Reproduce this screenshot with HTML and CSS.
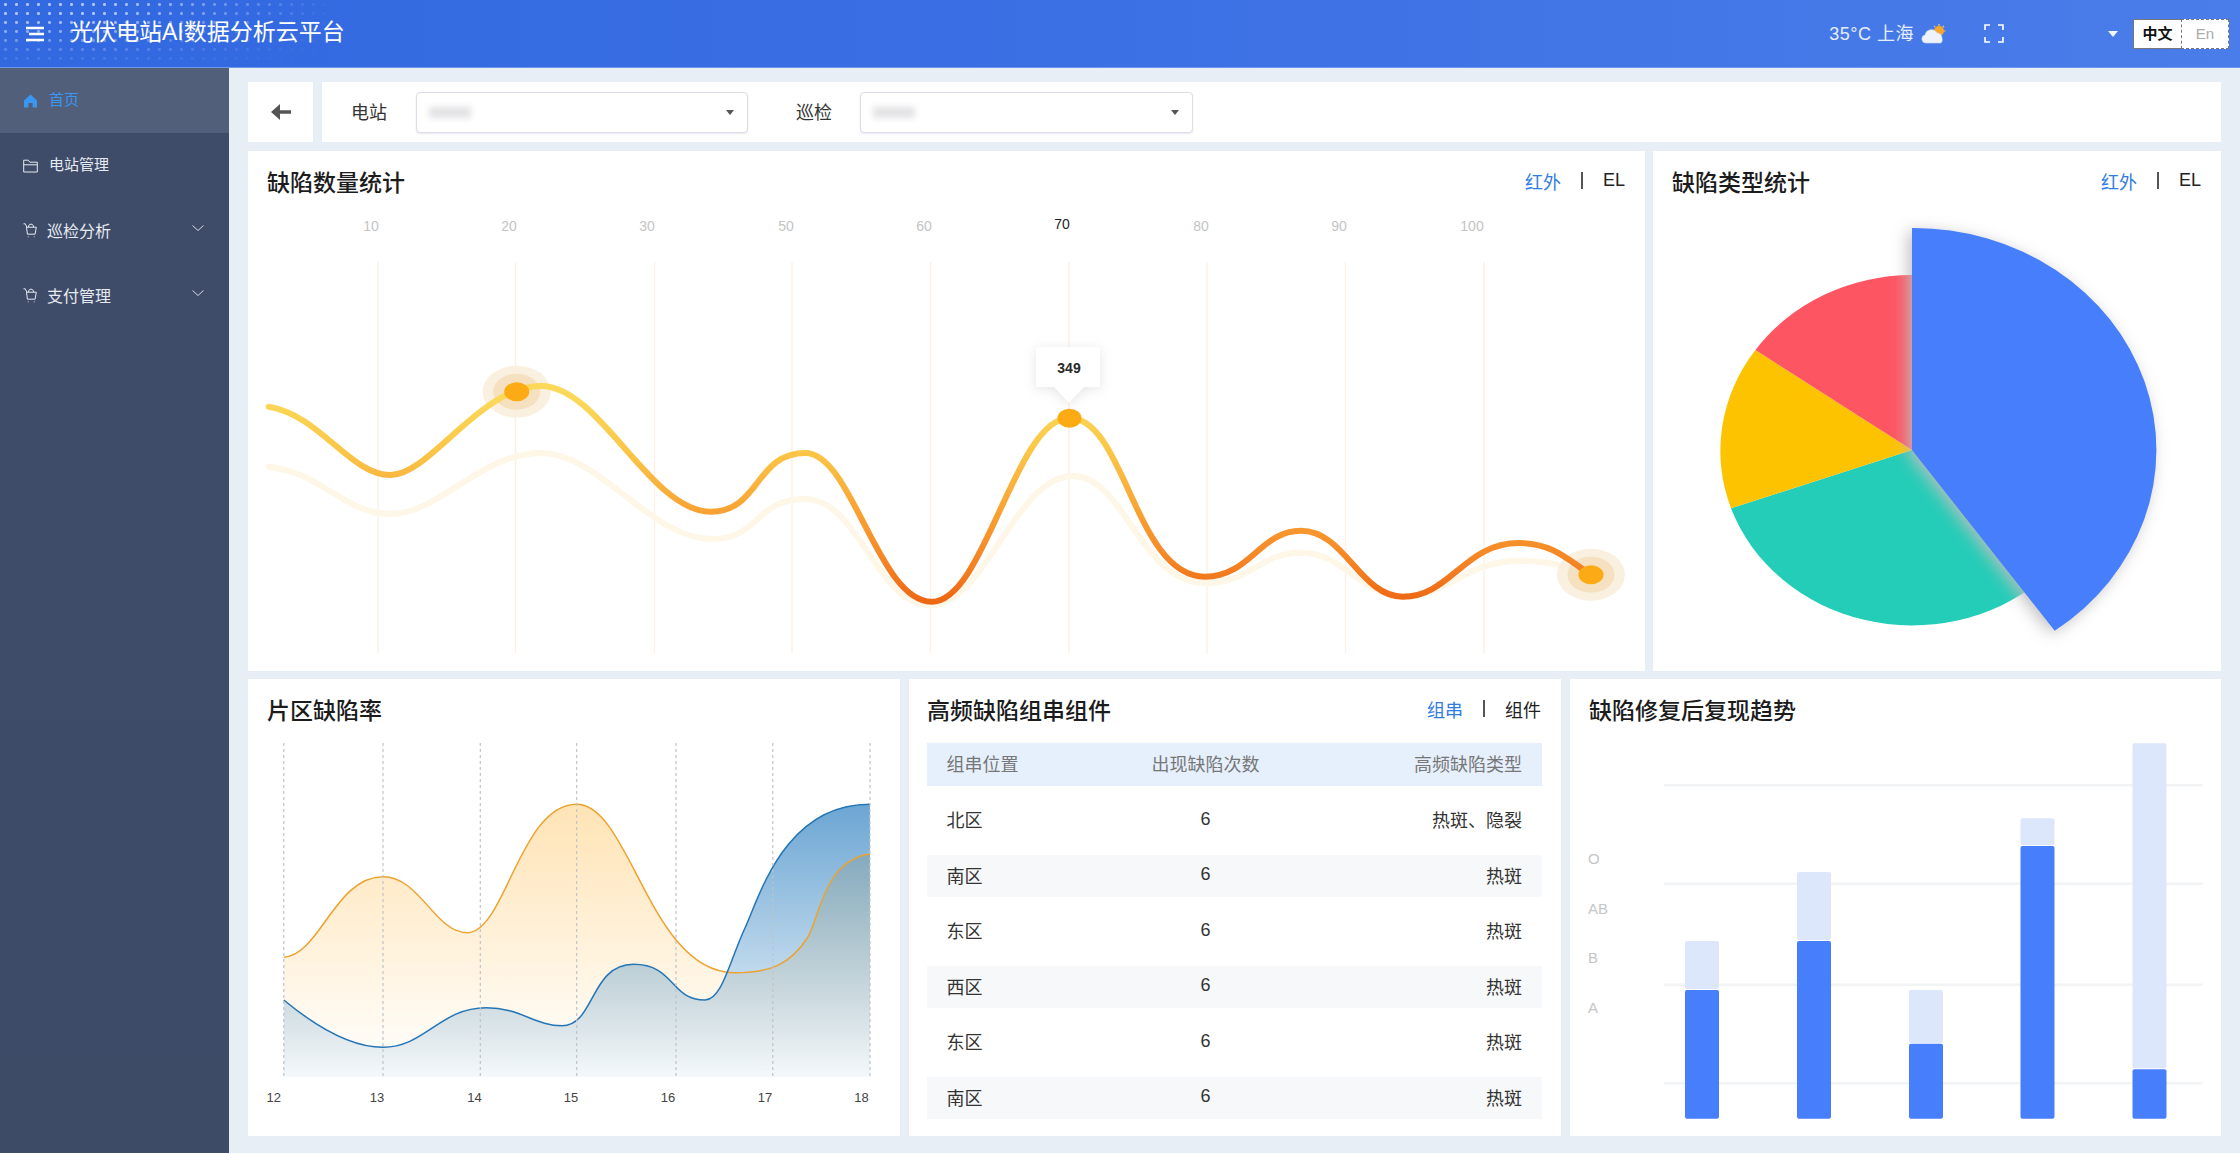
FILE: index.html
```html
<!DOCTYPE html>
<html lang="zh-CN">
<head>
<meta charset="utf-8">
<title>光伏电站AI数据分析云平台</title>
<link rel="stylesheet" href="styles.css">
</head>
<body>
<header class="topbar">
  <svg class="menu-icon" viewBox="0 0 18 16"><path d="M0 2h18M3 8h15M0 14h18"/></svg>
  <h1 class="brand">光伏电站AI数据分析云平台</h1>
  <div class="top-right">
    <span class="weather">35°C 上海</span>
    <svg class="weather-icon" viewBox="0 0 26 21">
      <g class="sun-rays"><path d="M18 1v2M24.5 8h-2M23 3l-1.5 1.5M13 3l1.2 1.2"/></g>
      <circle class="sun" cx="18" cy="8" r="5"/>
      <path class="cloud" d="M5 20a4 4 0 0 1-1-7.9 6.5 6.5 0 0 1 12-2.2 5 5 0 0 1 5 5.1A5 5 0 0 1 20 20z"/>
    </svg>
    <svg class="full-icon" viewBox="0 0 20 19"><path d="M1 6V1h5M14 1h5v5M1 13v5h5M14 18h5v-5"/></svg>
    <svg class="top-caret" viewBox="0 0 10 6"><path d="M0 0h10L5 6z"/></svg>
    <div class="lang">
      <span class="lang-on">中文</span>
      <span class="lang-off">En</span>
    </div>
  </div>
</header>
<div class="shell">
  <nav class="sidebar">
    <a class="nav-item active">
      <svg class="nav-icon" viewBox="0 0 15 14"><path class="fill" d="M7.5 0.5L14 6.5v7H9.6V9H5.4v4.500H1v-7z"/></svg>
      <span>首页</span>
    </a>
    <a class="nav-item">
      <svg class="nav-icon" viewBox="0 0 15 14"><path d="M.7 13V1.200h4.600l1.500 2h7.500V13zM.7 5.800h13.600"/></svg>
      <span>电站管理</span>
    </a>
    <a class="nav-item cart">
      <svg class="nav-icon" viewBox="0 0 15 15"><path d="M.5 .8h1.800l1.500 3.400M3.500 4.200h9.800l-1.200 7H4.400zM5.500 4.200C5.500 2 6.500 1.200 8 1.200s2.500 .8 2.500 3M4.800 13.800h.8M10.800 13.800h.8"/></svg>
      <span>巡检分析</span>
      <svg class="chev" viewBox="0 0 12 6"><path d="M.5 .5L6 5.500 11.500 .5"/></svg>
    </a>
    <a class="nav-item cart">
      <svg class="nav-icon" viewBox="0 0 15 15"><path d="M.5 .8h1.800l1.500 3.400M3.500 4.200h9.800l-1.200 7H4.400zM5.500 4.200C5.500 2 6.500 1.200 8 1.200s2.500 .8 2.500 3M4.800 13.800h.8M10.800 13.800h.8"/></svg>
      <span>支付管理</span>
      <svg class="chev" viewBox="0 0 12 6"><path d="M.5 .5L6 5.500 11.500 .5"/></svg>
    </a>
  </nav>
  <main class="main">
    <section class="toolbar">
      <div class="back-box">
        <svg class="back-icon" viewBox="0 0 20 16"><path d="M9 0v6.200h11v3.600H9V16L0 8z"/></svg>
      </div>
      <div class="filters">
        <label class="f-label">电站</label>
        <div class="select"><span class="smudge"></span><svg class="sel-caret" viewBox="0 0 10 6"><path d="M0 0h10L5 6z"/></svg></div>
        <label class="f-label second">巡检</label>
        <div class="select wide"><span class="smudge"></span><svg class="sel-caret" viewBox="0 0 10 6"><path d="M0 0h10L5 6z"/></svg></div>
      </div>
    </section>

    <section class="row-top">
      <article class="card">
        <div class="card-head">
          <h2>缺陷数量统计</h2>
          <div class="tabs"><span class="tab-on">红外</span><i></i><span>EL</span></div>
        </div>
        <svg class="chart" viewBox="248 215 1397 456">
          <defs>
            <linearGradient id="lineMain" gradientUnits="userSpaceOnUse" x1="0" y1="400" x2="0" y2="604">
              <stop offset="0" stop-color="#fbd858"/>
              <stop offset=".25" stop-color="#fbc648"/>
              <stop offset=".55" stop-color="#f8a233"/>
              <stop offset=".8" stop-color="#f48324"/>
              <stop offset="1" stop-color="#ee6512"/>
            </linearGradient>
          </defs>
          <g class="vlines">
            <path d="M378 262V653M515.500 262V653M654.500 262V653M792 262V653M930.500 262V653M1069 262V653M1207 262V653M1345.500 262V653M1484 262V653"/>
          </g>
          <g class="x-labels">
            <text x="371" y="231">10</text>
            <text x="509" y="231">20</text>
            <text x="647" y="231">30</text>
            <text x="786" y="231">50</text>
            <text x="924" y="231">60</text>
            <text class="x-active" x="1062" y="229">70</text>
            <text x="1201" y="231">80</text>
            <text x="1339" y="231">90</text>
            <text x="1472" y="231">100</text>
          </g>
          <path class="line-faint" d="M268.700 466.700C320 472 345 514 390.400 514C440 514 480 453 541 453C600 453 650 539 712 539C760 539 755 499 805 499C860 499 875 605 931 605C985 605 1015 476 1073 476C1125 476 1140 583 1205 583C1250 583 1260 552.700 1301 552.700C1345 552.700 1360 596 1403 596C1450 596 1465 561 1518.500 561C1555 561 1570 568 1591 574.700"/>
          <ellipse class="halo-out" cx="516.700" cy="391.700" rx="34" ry="26"/>
          <ellipse class="halo-in" cx="516.700" cy="391.700" rx="23.500" ry="18"/>
          <ellipse class="halo-out" cx="1591" cy="574.700" rx="34" ry="26"/>
          <ellipse class="halo-in" cx="1591" cy="574.700" rx="23.500" ry="18"/>
          <path class="line-main" stroke="url(#lineMain)" d="M268.700 406.700C320 415 350 475 390.400 475C430 475 480 386 541 386C600 386 650 511.700 710.700 511.700C760 511.700 755 453 805.400 453C852 453 878 601.700 931.700 601.700C985 601.700 1015 418 1069.500 418C1125 418 1135 576.700 1205 576.700C1250 576.700 1260 530.700 1301 530.700C1345 530.700 1360 596.700 1403 596.700C1450 596.700 1465 543 1518.500 543C1555 543 1570 562 1591 574.700"/>
          <ellipse class="dot" cx="516.700" cy="391.700" rx="12.500" ry="9.500"/>
          <ellipse class="dot" cx="1591" cy="574.700" rx="12.500" ry="9.500"/>
          <ellipse class="dot" cx="1069.500" cy="418.300" rx="12" ry="9.500"/>
          <path class="tip" d="M1037 347h62a1 1 0 0 1 1 1v38a1 1 0 0 1-1 1h-15l-15 16-15-16h-17a1 1 0 0 1-1-1v-38a1 1 0 0 1 1-1z"/>
          <text class="tip-text" x="1069" y="373">349</text>
        </svg>
      </article>
      <article class="card">
        <div class="card-head">
          <h2>缺陷类型统计</h2>
          <div class="tabs"><span class="tab-on">红外</span><i></i><span>EL</span></div>
        </div>
        <svg class="chart" viewBox="1653 215 568 456">
          <path class="s-teal" d="M1912 450L2040 581A192 175 0 0 1 1731 508.300Z"/>
          <path class="s-yellow" d="M1912 450L1731 508.300A192 175 0 0 1 1755.400 350Z"/>
          <path class="s-red" d="M1912 450L1755.400 350A192 175 0 0 1 1912 275Z"/>
          <path class="s-blue" d="M1912 450V228A242.600 222 0 0 1 2054.700 630.700Z"/>
        </svg>
      </article>
    </section>

    <section class="row-bottom">
      <article class="card">
        <div class="card-head">
          <h2>片区缺陷率</h2>
        </div>
        <svg class="chart" viewBox="248 743 652 393">
          <defs>
            <linearGradient id="fillOrange" gradientUnits="userSpaceOnUse" x1="0" y1="804" x2="0" y2="1077">
              <stop offset="0" stop-color="#ffc35e" stop-opacity=".46"/>
              <stop offset="1" stop-color="#ffc35e" stop-opacity="0"/>
            </linearGradient>
            <linearGradient id="fillBlue" gradientUnits="userSpaceOnUse" x1="0" y1="804" x2="0" y2="1077">
              <stop offset="0" stop-color="#1f78bd" stop-opacity=".66"/>
              <stop offset="1" stop-color="#1f78bd" stop-opacity=".05"/>
            </linearGradient>
          </defs>
          <path class="area-orange" d="M283.800 957.300C320 955 335 876.700 383 876.700C420 876.700 435 932.700 467.300 932.700C505 932.700 520 804.300 576.700 804.300C630 804.300 650 972.700 734.500 972.700C770 972.700 790 965 808 937C820 915 825 860 870 854V1077H283.800Z"/>
          <path class="area-blue" d="M283.800 1000C320 1030 355 1047.300 383 1047.300C425 1047.300 440 1007.700 486.200 1007.700C520 1007.700 535 1025.700 562 1025.700C595 1025.700 590 964.300 633.500 964.300C675 964.300 670 1000 705 1000C722 1000 730 960 745 928C760 895 785 804.300 870 804.300V1077H283.800Z"/>
          <path class="stroke-orange" d="M283.800 957.300C320 955 335 876.700 383 876.700C420 876.700 435 932.700 467.300 932.700C505 932.700 520 804.300 576.700 804.300C630 804.300 650 972.700 734.500 972.700C770 972.700 790 965 808 937C820 915 825 860 870 854"/>
          <path class="stroke-blue" d="M283.800 1000C320 1030 355 1047.300 383 1047.300C425 1047.300 440 1007.700 486.200 1007.700C520 1007.700 535 1025.700 562 1025.700C595 1025.700 590 964.300 633.500 964.300C675 964.300 670 1000 705 1000C722 1000 730 960 745 928C760 895 785 804.300 870 804.300"/>
          <path class="dash" d="M283.800 743V1077M383 743V1077M480.300 743V1077M576.700 743V1077M676 743V1077M772.800 743V1077M870 743V1077"/>
          <g class="area-labels">
            <text x="273.700" y="1102">12</text>
            <text x="377" y="1102">13</text>
            <text x="474.400" y="1102">14</text>
            <text x="571" y="1102">15</text>
            <text x="668" y="1102">16</text>
            <text x="765" y="1102">17</text>
            <text x="861.600" y="1102">18</text>
          </g>
        </svg>
      </article>
      <article class="card card-table">
        <div class="card-head">
          <h2>高频缺陷组串组件</h2>
          <div class="tabs"><span class="tab-on">组串</span><i></i><span>组件</span></div>
        </div>
        <div class="table">
          <div class="t-row t-head"><span>组串位置</span><span>出现缺陷次数</span><span>高频缺陷类型</span></div>
          <div class="t-row"><span>北区</span><span>6</span><span>热斑、隐裂</span></div>
          <div class="t-row band"><span>南区</span><span>6</span><span>热斑</span></div>
          <div class="t-row"><span>东区</span><span>6</span><span>热斑</span></div>
          <div class="t-row band"><span>西区</span><span>6</span><span>热斑</span></div>
          <div class="t-row"><span>东区</span><span>6</span><span>热斑</span></div>
          <div class="t-row band"><span>南区</span><span>6</span><span>热斑</span></div>
        </div>
      </article>
      <article class="card">
        <div class="card-head">
          <h2>缺陷修复后复现趋势</h2>
        </div>
        <svg class="chart" viewBox="1570 743 651 393">
          <path class="grid-line" d="M1664 785.300H2202.700M1664 883.700H2202.700M1664 984.700H2202.700M1664 1083.300H2202.700"/>
          <g class="y-labels">
            <text x="1588" y="864">O</text>
            <text x="1588" y="914">AB</text>
            <text x="1588" y="963">B</text>
            <text x="1588" y="1013">A</text>
          </g>
          <g class="bar-light">
            <rect x="1685" y="941" width="34" height="48" rx="2"/>
            <rect x="1797" y="872" width="34" height="68" rx="2"/>
            <rect x="1909" y="990" width="34" height="53" rx="2"/>
            <rect x="2020.500" y="818.300" width="34" height="27" rx="2"/>
            <rect x="2132.500" y="743.300" width="34" height="325" rx="2"/>
          </g>
          <g class="bar-dark">
            <rect x="1685" y="990" width="34" height="128.700" rx="2"/>
            <rect x="1797" y="941" width="34" height="177.700" rx="2"/>
            <rect x="1909" y="1043.700" width="34" height="75" rx="2"/>
            <rect x="2020.500" y="846" width="34" height="272.700" rx="2"/>
            <rect x="2132.500" y="1069.300" width="34" height="49.400" rx="2"/>
          </g>
        </svg>
      </article>
    </section>
  </main>
</div>
</body>
</html>
```

FILE: styles.css
```css
* { box-sizing: border-box; }
html, body { margin: 0; height: 100%; }
body {
  width: 2240px;
  height: 1153px;
  overflow: hidden;
  display: flex;
  flex-direction: column;
  background: #e8eef6;
  font-family: "Liberation Sans", "Noto Sans CJK SC", sans-serif;
  color: #222;
}

/* top bar */
.topbar {
  position: relative;
  flex: 0 0 68px;
  display: flex;
  align-items: center;
  padding: 0 11px 0 26px;
  background: linear-gradient(90deg, #3268e0 0%, #3a6fe4 45%, #4a7de9 100%);
  border-bottom: 1px solid #6e95ec;
  color: #fff;
}
.topbar::before {
  content: "";
  position: absolute;
  left: 0;
  top: 0;
  width: 345px;
  height: 67px;
  background-image: radial-gradient(circle, rgba(255, 255, 255, .62) 1.2px, transparent 1.8px);
  background-size: 11px 9px;
  -webkit-mask-image: linear-gradient(100deg, #000 30%, transparent 95%), linear-gradient(180deg, #000 25%, transparent 100%);
  -webkit-mask-composite: source-in;
  mask-composite: intersect;
}
.menu-icon {
  position: relative;
  width: 18px;
  height: 16px;
  fill: none;
  stroke: #fff;
  stroke-width: 2.4;
}
.brand {
  position: relative;
  margin: 0 0 0 26px;
  padding-bottom: 4px;
  font-size: 23px;
  line-height: 30px;
  font-weight: 400;
}
.top-right {
  margin-left: auto;
  display: flex;
  align-items: center;
}
.weather { padding-bottom: 4px; font-size: 18px; letter-spacing: .5px; color: #e6edfd; }
.weather-icon { width: 26px; height: 21px; margin-left: 7px; }
.sun { fill: #f7a828; }
.sun-rays path { fill: none; stroke: #f7c060; stroke-width: 1.2; }
.cloud { fill: #eef3fb; stroke: #cfdcf3; stroke-width: .6; }
.full-icon {
  width: 20px;
  height: 19px;
  margin-left: 37px;
  margin-right: 1px;
  fill: none;
  stroke: #fff;
  stroke-width: 1.6;
}
.top-caret { width: 10px; height: 6px; margin-left: 103px; fill: #f3f6fe; }
.lang {
  display: flex;
  height: 30px;
  margin-left: 15px;
  font-size: 15px;
  line-height: 28px;
  text-align: center;
}
.lang span { width: 48px; background: #fff; }
.lang-on { border: 1px solid #777; border-right: 0; font-weight: 700; color: #111; }
.lang-off { border: 1px dashed #777; color: #aaa; }

/* shell */
.shell { flex: 1; display: flex; min-height: 0; }
.sidebar {
  flex: 0 0 229px;
  background: linear-gradient(180deg, #3e4c69 0%, #3d4b67 100%);
}
.nav-item {
  display: flex;
  align-items: center;
  height: 65px;
  padding: 0 25px 0 23px;
  font-size: 15px;
  color: #e7eaf0;
}
.nav-item span { padding-bottom: 5px; }
.nav-item.cart { font-size: 16px; }
.nav-item.cart span { padding-bottom: 2px; }
.nav-item.active { background: #525f7a; color: #3a96f0; }
.nav-icon {
  flex: 0 0 15px;
  width: 15px;
  height: 14px;
  margin-right: 11px;
  fill: none;
  stroke: #e7eaf0;
  stroke-width: 1;
}
.cart .nav-icon { margin-right: 9px; height: 15px; }
.active .nav-icon { stroke: none; }
.nav-icon .fill { fill: #3a96f0; }
.chev {
  width: 12px;
  height: 6px;
  margin-left: auto;
  margin-top: -5px;
  fill: none;
  stroke: #d5dae4;
  stroke-width: 1;
}

/* main */
.main {
  flex: 1;
  min-width: 0;
  padding: 14px 19px 17px;
  display: flex;
  flex-direction: column;
}
.toolbar {
  flex: 0 0 60px;
  display: flex;
  gap: 9px;
  margin-bottom: 9px;
}
.back-box {
  flex: 0 0 65px;
  display: flex;
  align-items: center;
  justify-content: center;
  background: #fff;
}
.back-icon { width: 20px; height: 16px; fill: #555; }
.filters {
  flex: 1;
  display: flex;
  align-items: center;
  padding-left: 29px;
  background: #fff;
}
.f-label { width: 36px; padding-bottom: 3px; font-size: 18px; color: #333; margin-right: 29px; }
.f-label.second { margin-left: 48px; margin-right: 28px; }
.select {
  width: 332px;
  height: 41px;
  display: flex;
  align-items: center;
  justify-content: space-between;
  padding: 0 13px 0 12px;
  background: #fff;
  border: 1px solid #dcdde8;
  border-radius: 4px;
  box-shadow: 0 1px 2px rgba(120, 125, 170, .18);
}
.select.wide { width: 333px; }
.smudge {
  width: 42px;
  height: 11px;
  background: #e2e2e4;
  filter: blur(3px);
}
.sel-caret { width: 8px; height: 5px; fill: #555; }

/* cards */
.row-top {
  flex: 0 0 520px;
  display: grid;
  grid-template-columns: 1397px 568px;
  column-gap: 8px;
  margin-bottom: 8px;
}
.row-bottom {
  flex: 0 0 457px;
  display: grid;
  grid-template-columns: 652px 652px 651px;
  column-gap: 9px;
}
.card {
  display: flex;
  flex-direction: column;
  min-width: 0;
  background: #fff;
}
.card-head {
  flex: 0 0 64px;
  display: flex;
  align-items: center;
  justify-content: space-between;
  padding: 0 20px 5px 19px;
}
.card-head h2 {
  margin: 0;
  font-size: 23px;
  font-weight: 500;
  color: #1c1c1c;
}
.tabs {
  display: flex;
  align-items: center;
  gap: 20px;
  font-size: 18px;
  color: #222;
}
.tabs i { width: 2px; height: 17px; background: #555; }
.tab-on { color: #2f7de1; }
.chart { display: block; flex: 1; width: 100%; min-height: 0; }

/* line chart */
.vlines path { fill: none; stroke: #fdefe5; stroke-width: 1.3; }
.x-labels text { font-size: 14px; fill: #c4c4c4; text-anchor: middle; }
.x-labels .x-active { fill: #222; }
.line-faint { fill: none; stroke: #fef6e7; stroke-width: 6; stroke-linecap: round; }
.line-main { fill: none; stroke-width: 6; stroke-linecap: round; }
.halo-out { fill: #f9eedd; opacity: .9; }
.halo-in { fill: #f5e0c0; }
.dot { fill: #fdab14; }
.tip { fill: #fff; filter: drop-shadow(0 2px 6px rgba(90, 90, 90, .16)); }
.tip-text { font-size: 14px; font-weight: 700; fill: #2a2a2a; text-anchor: middle; }

/* pie */
.s-teal { fill: #24cdb8; }
.s-yellow { fill: #fdc300; }
.s-red { fill: #fe5563; }
.s-blue { fill: #477efc; filter: drop-shadow(-4px 3px 8px rgba(190, 190, 190, .95)); }

/* area chart */
.area-orange { fill: url(#fillOrange); }
.area-blue { fill: url(#fillBlue); }
.stroke-orange { fill: none; stroke: #eda22f; stroke-width: 1.5; }
.stroke-blue { fill: none; stroke: #2375b5; stroke-width: 1.5; }
.dash { fill: none; stroke: #bfc3c7; stroke-width: 1.2; stroke-dasharray: 3 3; }
.area-labels text { font-size: 13px; fill: #444; text-anchor: middle; }

/* table */
.card-table .card-head { padding: 0 20px 5px 18px; }
.table {
  display: flex;
  flex-direction: column;
  gap: 13.5px;
  margin: 0 19.5px 0 18px;
}
.t-row {
  display: grid;
  grid-template-columns: 166px 186px 1fr;
  align-items: center;
  height: 42px;
  padding: 0 19.5px;
  font-size: 18px;
  color: #333;
}
.t-row span { padding-bottom: 3px; }
.t-row span:nth-child(2) { text-align: center; }
.t-row span:nth-child(3) { text-align: right; }
.t-head { height: 43px; background: #e6f0fd; color: #777; }
.band { background: #f6f8fa; }

/* bars */
.grid-line { fill: none; stroke: #f2f3f5; stroke-width: 2.5; }
.y-labels text { font-size: 15px; fill: #c6c6c6; }
.bar-light rect { fill: #dde7fb; }
.bar-dark rect { fill: #477efc; }
```
